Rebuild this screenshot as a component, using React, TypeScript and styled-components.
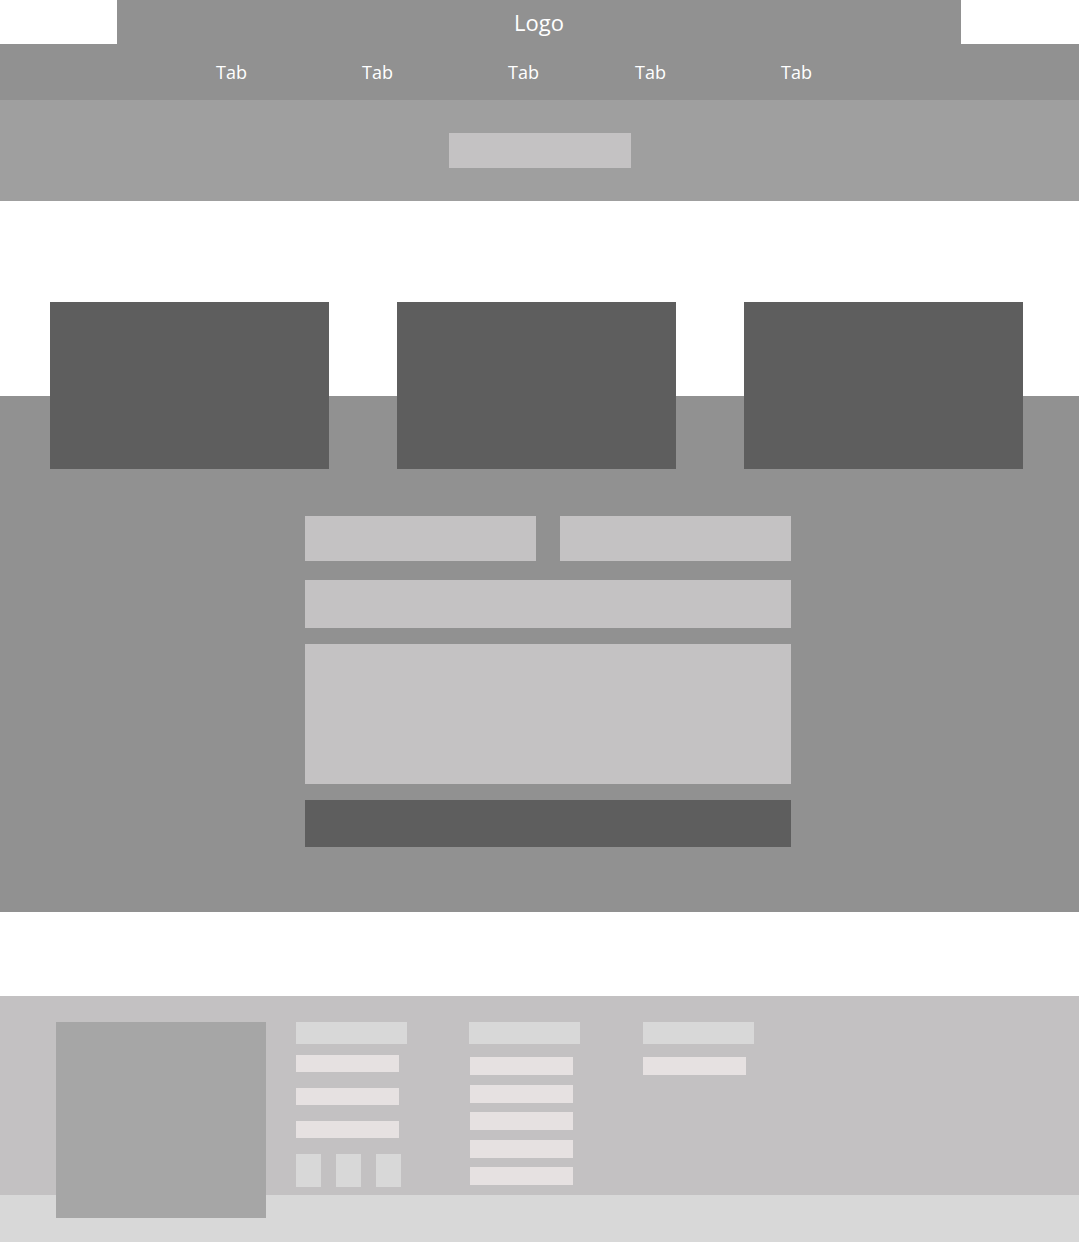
import React from "react";
import styled, { createGlobalStyle } from "styled-components";

const GlobalStyle = createGlobalStyle`
  * { box-sizing: border-box; }
  html, body { margin: 0; padding: 0; background: #ffffff; }
  body { font-family: "Open Sans", "Liberation Sans", sans-serif; }
`;

const Page = styled.div`
  width: 1080px;
  display: flex;
  flex-direction: column;
`;

const LogoBar = styled.div`
  margin-left: 117px;
  width: 844px;
  height: 44px;
  background: #919191;
  display: flex;
  align-items: center;
  justify-content: center;
  color: #ffffff;
  font-size: 22px;
  line-height: 1;
`;

const TabBar = styled.nav`
  width: 1079px;
  height: 56px;
  background: #919191;
  display: flex;
  align-items: center;
  padding-left: 216px;
  padding-bottom: 1px;
`;

const Tab = styled.span<{ $w: number }>`
  width: ${(p) => p.$w}px;
  color: #ffffff;
  font-size: 18px;
  line-height: 1;
`;

const Hero = styled.section`
  width: 1079px;
  height: 101px;
  background: #9f9f9f;
  display: flex;
  align-items: center;
  justify-content: center;
  padding-left: 1px;
`;

const HeroButton = styled.div`
  width: 182px;
  height: 35px;
  background: #c4c2c3;
`;

const Main = styled.section`
  width: 1079px;
  height: 711px;
  background: linear-gradient(to bottom, #ffffff 195px, #919191 195px);
  padding-top: 101px;
  display: flex;
  flex-direction: column;
`;

const CardRow = styled.div`
  display: flex;
  gap: 68px;
  padding-left: 50px;
`;

const Card = styled.div`
  width: 279px;
  height: 167px;
  background: #5e5e5e;
`;

const Form = styled.div`
  margin-top: 47px;
  margin-left: 305px;
  width: 486px;
  display: flex;
  flex-direction: column;
`;

const InputRow = styled.div`
  display: grid;
  grid-template-columns: 1fr 1fr;
  column-gap: 24px;
`;

const Field = styled.div<{ $h: number; $mt?: number }>`
  height: ${(p) => p.$h}px;
  flex-shrink: 0;
  margin-top: ${(p) => p.$mt ?? 0}px;
  background: #c4c2c3;
`;

const Submit = styled.div`
  margin-top: 16px;
  height: 47px;
  flex-shrink: 0;
  background: #5e5e5e;
`;

const Spacer = styled.div`
  height: 84px;
`;

const Footer = styled.footer`
  width: 1079px;
  height: 246px;
  background: linear-gradient(to bottom, #c3c1c2 199px, #d8d8d8 199px);
  padding: 26px 0 0 56px;
  display: flex;
  align-items: flex-start;
`;

const FooterImage = styled.div`
  width: 210px;
  height: 196px;
  background: #a6a6a6;
  margin-right: 30px;
`;

const Columns = styled.div`
  display: grid;
  grid-template-columns: 173px 174px 111px;
`;

const Column = styled.div<{ $gap: number; $first: number }>`
  display: flex;
  flex-direction: column;
  gap: ${(p) => p.$gap}px;
  & > :nth-child(2) { margin-top: ${(p) => p.$first - p.$gap}px; }
`;

const Heading = styled.div`
  width: 111px;
  height: 22px;
  background: #d8d8d8;
`;

const LinkBar = styled.div<{ $h: number; $x?: number }>`
  width: 103px;
  height: ${(p) => p.$h}px;
  margin-left: ${(p) => p.$x ?? 0}px;
  background: #e6e1e1;
`;

const Socials = styled.div`
  display: flex;
  gap: 15px;
`;

const Social = styled.div`
  width: 25px;
  height: 33px;
  background: #d8d8d8;
`;

export default function App() {
  const tabs = [146, 146, 127, 146, 40];
  return (
    <Page>
      <GlobalStyle />
      <LogoBar>Logo</LogoBar>
      <TabBar>
        {tabs.map((w, i) => (
          <Tab key={i} $w={w}>
            Tab
          </Tab>
        ))}
      </TabBar>
      <Hero>
        <HeroButton />
      </Hero>
      <Main>
        <CardRow>
          <Card />
          <Card />
          <Card />
        </CardRow>
        <Form>
          <InputRow>
            <Field $h={45} />
            <Field $h={45} />
          </InputRow>
          <Field $h={48} $mt={19} />
          <Field $h={140} $mt={16} />
          <Submit />
        </Form>
      </Main>
      <Spacer />
      <Footer>
        <FooterImage />
        <Columns>
          <Column $gap={16} $first={11}>
            <Heading />
            <LinkBar $h={17} />
            <LinkBar $h={17} />
            <LinkBar $h={17} />
            <Socials>
              <Social />
              <Social />
              <Social />
            </Socials>
          </Column>
          <Column $gap={9.5} $first={13}>
            <Heading />
            <LinkBar $h={18} $x={1} />
            <LinkBar $h={18} $x={1} />
            <LinkBar $h={18} $x={1} />
            <LinkBar $h={18} $x={1} />
            <LinkBar $h={18} $x={1} />
          </Column>
          <Column $gap={9.5} $first={13}>
            <Heading />
            <LinkBar $h={18} />
          </Column>
        </Columns>
      </Footer>
    </Page>
  );
}
